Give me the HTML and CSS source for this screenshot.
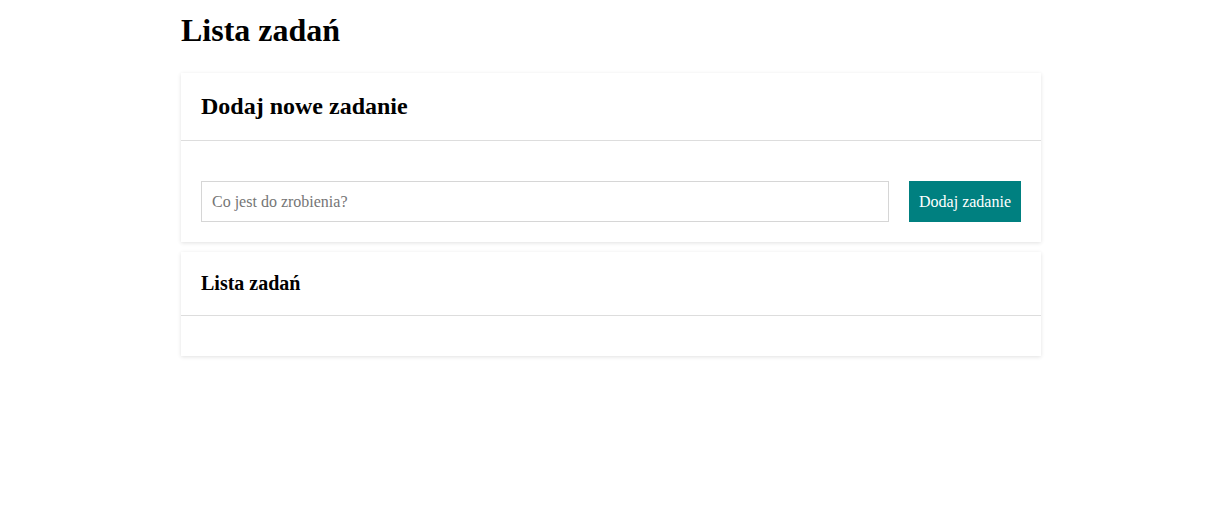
FILE: index.html
```html
<!DOCTYPE html>
<html lang="pl">
<head>
<meta charset="utf-8">
<title>Lista zadań</title>
<link rel="stylesheet" href="styles.css">
</head>
<body>
<main class="page">
  <h1 class="page-title">Lista zadań</h1>
  <section class="card">
    <header class="card-header">
      <h2 class="card-title">Dodaj nowe zadanie</h2>
    </header>
    <div class="card-body card-body--form">
      <form class="task-form">
        <input class="task-input" type="text" placeholder="Co jest do zrobienia?">
        <button class="task-button" type="button">Dodaj zadanie</button>
      </form>
    </div>
  </section>
  <section class="card">
    <header class="card-header">
      <h3 class="card-subtitle">Lista zadań</h3>
    </header>
    <div class="card-body"></div>
  </section>
</main>
</body>
</html>
```

FILE: styles.css
```css
html, body {
  margin: 0;
  padding: 0;
  background: #ffffff;
}
body {
  font-family: "Liberation Serif", "Times New Roman", serif;
  color: #000;
}
.page {
  width: 860px;
  margin-left: 181px;
  padding-top: 12px;
}
.page-title {
  margin: 0 0 24px;
  font-size: 32px;
  line-height: 37px;
  font-weight: bold;
}
.card {
  background: #fff;
  box-shadow: 0 1px 4px rgba(0, 0, 0, 0.12);
  margin-bottom: 10px;
}
.card-header {
  padding: 20px;
  border-bottom: 1px solid #dddddd;
}
.card-title {
  margin: 0;
  font-size: 24px;
  line-height: 27px;
  font-weight: bold;
}
.card-subtitle {
  margin: 0;
  font-size: 20px;
  line-height: 23px;
  font-weight: bold;
}
.card-body {
  padding: 20px;
}
.card-body--form {
  padding-top: 40px;
}
.task-form {
  display: flex;
  gap: 20px;
  margin: 0;
}
.task-input {
  flex: 1;
  height: 41px;
  box-sizing: border-box;
  border: 1px solid #d6d6d6;
  padding: 0 10px;
  font-family: "Liberation Serif", "Times New Roman", serif;
  font-size: 16px;
  color: #000;
  outline: none;
}
.task-input::placeholder {
  color: #757575;
}
.task-button {
  height: 41px;
  box-sizing: border-box;
  padding: 0 10px;
  border: none;
  background: #008080;
  color: #fff;
  font-family: "Liberation Serif", "Times New Roman", serif;
  font-size: 16px;
  cursor: pointer;
}
```
